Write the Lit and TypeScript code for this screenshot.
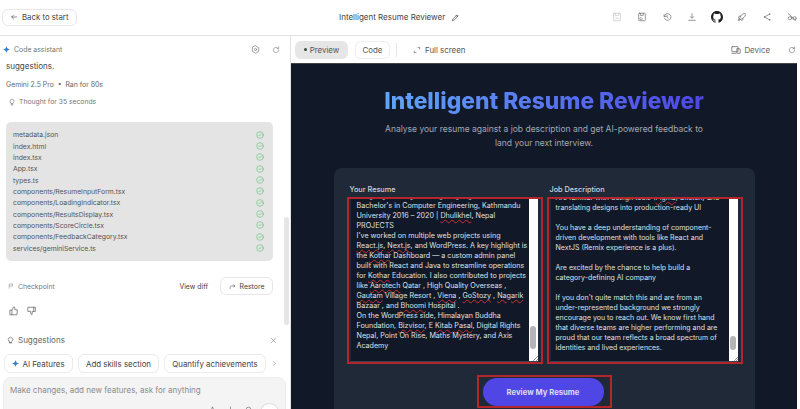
import { LitElement, html, css, svg } from "lit";
import { customElement } from "lit/decorators.js";

const ic = (body: unknown, size = 10, cls = "") => html`<svg class="ic ${cls}" width=${size} height=${size} viewBox="0 0 24 24" fill="none" stroke="currentColor" stroke-width="1.8" stroke-linecap="round" stroke-linejoin="round">${body}</svg>`;
const spark = (size = 8) => html`<svg width=${size} height=${size} viewBox="0 0 24 24"><path fill="#2f7fd8" d="M12 0C13 7 17 11 24 12 17 13 13 17 12 24 11 17 7 13 0 12 7 11 11 7 12 0Z"/></svg>`;
const refresh = svg`<path d="M20 12a8 8 0 1 1-2.6-5.900"/><path d="M20 3v5h-5"/>`;
const files = ["metadata.json","index.html","index.tsx","App.tsx","types.ts","components/ResumeInputForm.tsx","components/LoadingIndicator.tsx","components/ResultsDisplay.tsx","components/ScoreCircle.tsx","components/FeedbackCategory.tsx","services/geminiService.ts"];
const sp = (t: string) => html`<span class="sp">${t}</span>`;

@customElement("app-root")
export class AppRoot extends LitElement {
  static styles = css`
    :host { display: block; width: 800px; height: 409px; overflow: hidden; background: #fff; font-family: Inter, "Liberation Sans", sans-serif; color: #3c3c3c; }
    * { box-sizing: border-box; }
    svg { display: block; flex: none; }
    .header { height: 36px; border-bottom: 1px solid #e3e3e3; display: flex; align-items: center; padding: 0 3px 1px 2px; }
    .back { height: 17px; width: 75px; border: 1px solid #e8e8e8; border-radius: 6px; display: flex; align-items: center; gap: 4px; padding-left: 7px; font-size: 7.8px; color: #444; }
    .title { margin-left: 262px; display: flex; align-items: center; gap: 6px; font-size: 8px; color: #444; white-space: nowrap; }
    .actions { margin-left: auto; display: flex; align-items: center; gap: 15px; color: #777; }
    .dim { color: #c8c8c8; }
    .gh { margin: 0 -1px; }
    .main { display: flex; height: 373px; }
    .left { width: 291px; flex: none; border-right: 1px solid #e3e3e3; position: relative; overflow: hidden; }
    .thumbbar { position: absolute; left: 284px; top: 181px; width: 5px; height: 108px; background: #e6e6e6; border-radius: 3px; }
    .ca { display: flex; align-items: center; height: 27px; padding: 0 10px 0 3px; font-size: 6.9px; color: #777; gap: 4px; }
    .ca .sp1 { flex: 1; }
    .ca .g { margin-right: 8px; }
    .sugg { font-size: 8px; padding-left: 6px; color: #444; line-height: 10px; margin-top: -2px; }
    .meta { font-size: 6.9px; color: #666; padding-left: 6px; margin-top: 9px; line-height: 9px; white-space: nowrap; }
    .thought { display: flex; align-items: center; gap: 3px; font-size: 6.8px; color: #777; padding-left: 8px; margin-top: 8px; line-height: 10px; }
    .files { margin: 15px 0 0 6px; width: 267px; height: 139px; background: #e4e4e4; border-radius: 5px; padding: 7px 9px 0 7px; }
    .file { display: flex; justify-content: space-between; align-items: center; height: 11.35px; font-size: 6.8px; color: #555; }
    .check { color: #5fbf77; }
    .cp { display: flex; align-items: center; height: 20px; margin-top: 15px; padding: 0 17px 0 8px; font-size: 6.800px; color: #777; }
    .cp .cpt { display: flex; align-items: center; gap: 4px; flex: 1; }
    .diff { color: #444; font-size: 6.9px; margin-right: 12px; }
    .restore { width: 53px; height: 18px; border: 1px solid #e6e6e6; border-radius: 6px; display: flex; align-items: center; justify-content: center; gap: 4px; color: #444; font-size: 6.9px; }
    .thumbs { display: flex; gap: 8px; color: #666; padding-left: 9px; margin-top: 10px; }
    .sghead { display: flex; align-items: center; gap: 3px; padding: 0 13px 0 6px; margin-top: 18px; font-size: 8px; color: #666; height: 12px; }
    .sghead span { flex: 1; }
    .chips { display: flex; gap: 5px; padding-left: 4px; margin-top: 8px; font-size: 7.9px; color: #444; align-items: center; }
    .chip { height: 19px; border: 1px solid #ebebeb; border-radius: 6px; display: flex; align-items: center; justify-content: center; gap: 3px; white-space: nowrap; }
    .more { color: #777; }
    .input { margin: 4px 0 0 3px; width: 283px; height: 60px; background: #f4f4f4; border: 1px solid #ececec; border-radius: 8px; padding: 7px 6px; font-size: 8px; line-height: 10px; color: #8a8a8a; }
    .tools { display: flex; justify-content: flex-end; align-items: flex-start; margin-top: 8px; color: #444; gap: 11px; }
    .tools .ic { margin-top: 3px; }
    .circle { width: 19px; height: 19px; border-radius: 50%; background: #fff; border: 1px solid #ddd; margin-left: -3px; }
    .right { flex: 1; min-width: 0; display: flex; flex-direction: column; padding-right: 3px; }
    .toolbar { height: 27px; display: flex; align-items: center; font-size: 7.9px; color: #555; }
    .pill { height: 18px; border-radius: 6px; display: flex; align-items: center; justify-content: center; }
    .pv { width: 53px; margin-left: 4px; background: #e6e6e6; gap: 3px; }
    .dot { width: 3px; height: 3px; border-radius: 50%; background: #444; }
    .cd { width: 35px; margin-left: 7px; border: 1px solid #eeeeee; }
    .div { width: 1px; height: 14px; background: #e6e6e6; margin: 0 16px 0 6px; }
    .fs { display: flex; align-items: center; gap: 4px; }
    .dev { margin-left: auto; display: flex; align-items: center; gap: 3px; color: #666; }
    .rf { margin: 0 1px 0 18px; color: #666; }
    .preview { flex: 1; background: #111827; border-top: 1px solid #444; display: flex; flex-direction: column; align-items: center; overflow: hidden; }
    h1 { margin: 22px 0 0; font-size: 22.800px; line-height: 30px; font-weight: 800; background: linear-gradient(90deg, #60a5fa, #4f46e5); -webkit-background-clip: text; background-clip: text; color: transparent; white-space: nowrap; }
    .sub { margin-top: 6px; text-align: center; font-size: 8.5px; line-height: 14px; color: #a2a8b3; width: 328px; }
    .card { margin-top: 18px; width: 421px; flex: none; height: 260px; background: #1f2937; border-radius: 8px 8px 0 0; padding: 17px 12px 0 13px; }
    .cols { display: grid; grid-template-columns: 196px 196px; gap: 4px; }
    .lab { font-size: 7.3px; font-weight: 500; color: #d1d5db; padding-left: 3px; line-height: 9px; height: 12px; }
    .red { height: 167px; border: 2px solid #b3272c; padding: 0 3px 2px 2px; }
    .ta { height: 163px; background: #111827; display: flex; border-bottom: 1px solid #374151; overflow: hidden; }
    .txt { flex: 1; min-width: 0; padding: 0 0 0 6px; font-size: 7.150px; line-height: 10px; color: #dfe2e6; white-space: nowrap; overflow: hidden; }
    .txt.r { margin-top: -8px; height: 171px; }
    .txt.j { margin-top: -6px; height: 169px; padding-left: 5px; font-size: 7px; }
    .bar { width: 9px; background: #fff; flex: none; position: relative; }
    .bar i { position: absolute; left: 1px; width: 6px; height: 23px; background: #b4b4b4; border-radius: 3px; }
    .bar b { position: absolute; right: 0; bottom: 0; width: 5px; height: 5px; background: linear-gradient(135deg, transparent 50%, #999 50%, #999 60%, transparent 60%, transparent 75%, #999 75%, #999 85%, transparent 85%); }
    .sp { text-decoration: underline wavy #c33; text-decoration-thickness: 0.5px; text-underline-offset: 1px; }
    .redbtn { margin: 11px 0 0 130px; width: 135px; height: 33px; border: 2px solid #b3272c; padding: 1px 4px; }
    .btn { width: 121px; height: 28px; background: #4f46e5; border-radius: 14px; display: flex; align-items: center; justify-content: center; color: #dcdcf2; font-size: 7.700px; font-weight: 700; }
  `;

  render() {
    return html`
      <div class="header">
        <div class="back">${ic(svg`<path d="M20 12H5M11 6l-6 6 6 6"/>`, 8)}Back to start</div>
        <div class="title">Intelligent Resume Reviewer ${ic(svg`<path d="M4 20l1-4L16 5l3 3L8 19z"/><path d="M14 7l3 3"/>`, 9)}</div>
        <div class="actions">
          ${ic(svg`<rect x="4" y="3" width="16" height="18" rx="1"/><path d="M8 3v5h8V3M9 15h6"/>`, 10, "dim")}
          ${ic(svg`<rect x="4" y="3" width="16" height="18" rx="2"/><path d="M8 3v5h7V3M10 13a3 3 0 1 0 3 3"/>`, 10)}
          ${ic(svg`<path d="M5 6v5h5"/><path d="M5.500 11a8 8 0 1 1 .5 4"/><path d="M12 8v4l3 2"/>`, 10)}
          ${ic(svg`<path d="M12 4v10M8 11l4 4 4-4M4 20h16"/>`, 10)}
          <svg class="gh" width="12" height="12" viewBox="0 0 16 16" fill="#222"><path d="M8 0C3.580 0 0 3.580 0 8c0 3.540 2.290 6.530 5.470 7.590.4.07.55-.17.55-.38 0-.19-.01-.82-.01-1.490-2.010.37-2.530-.49-2.690-.94-.09-.23-.48-.94-.82-1.130-.28-.15-.68-.52-.01-.53.63-.01 1.080.58 1.230.82.72 1.210 1.870.87 2.330.66.07-.52.28-.87.51-1.070-1.780-.2-3.640-.89-3.640-3.950 0-.87.31-1.590.82-2.150-.08-.2-.36-1.020.08-2.120 0 0 .67-.21 2.200.82.64-.18 1.320-.27 2-.27s1.360.09 2 .27c1.530-1.040 2.200-.82 2.200-.82.44 1.100.16 1.920.08 2.120.51.56.82 1.270.82 2.150 0 3.070-1.870 3.750-3.650 3.950.29.25.54.73.54 1.480 0 1.070-.01 1.930-.01 2.200 0 .21.15.46.55.38A8.010 8.010 0 0 0 16 8c0-4.420-3.580-8-8-8z"/></svg>
          ${ic(svg`<path d="M5 19l4-9C12 5 16 3 20 4c1 4-1 8-6 11zM9 10H5l-1 3M14 15v4l-3 1M5 15l-2 5 5-2"/>`, 10)}
          ${ic(svg`<circle cx="18" cy="5" r="1"/><circle cx="6" cy="12" r="1"/><circle cx="18" cy="19" r="1"/><path d="M7 11l10-5M7 13l10 5"/>`, 10)}
          ${ic(svg`<circle cx="7" cy="15" r="4"/><circle cx="18" cy="15" r="4"/><path d="M3 4l18 16M11 14h3"/>`, 10)}
        </div>
      </div>
      <div class="main">
        <div class="left">
          <div class="ca">${spark(7)}<span class="sp1">Code assistant</span><span class="g">${ic(svg`<circle cx="12" cy="12" r="3"/><path d="M12 2l8.500 5v10L12 22l-8.500-5V7z"/>`, 9)}</span>${ic(refresh, 8)}</div>
          <div class="sugg">suggestions.</div>
          <div class="meta">Gemini 2.5 Pro &nbsp;•&nbsp; Ran for 80s</div>
          <div class="thought">${ic(svg`<path d="M9 18h6M10 21h4M8 14a6 6 0 1 1 8 0c-1 1-1.500 2-1.500 3h-5C9.500 16 9 15 8 14z"/>`, 8)}Thought for 35 seconds</div>
          <div class="files">
            ${files.map(f => html`<div class="file"><span>${f}</span><span class="check">${ic(svg`<circle cx="12" cy="12" r="10"/><path d="M8 12l3 3 5-6"/>`, 8)}</span></div>`)}
          </div>
          <div class="cp">
            <span class="cpt">${ic(svg`<path d="M5 21V4h14l-3 4 3 4H5"/>`, 6)}Checkpoint</span>
            <span class="diff">View diff</span>
            <span class="restore">${ic(svg`<path d="M4 19v-4a5 5 0 0 1 5-5h11M16 6l4 4-4 4"/>`, 7)}Restore</span>
          </div>
          <div class="thumbs">
            ${ic(svg`<path d="M3 10h4v11H3zM7 10l4-8c2 0 3 1 3 3v4h6l-1 12H7"/>`, 10)}
            ${ic(svg`<path d="M3 3h17v10h-7l-1 8c-2 0-3-2-3-4v-4H3z"/><path d="M16 3v10"/>`, 10)}
          </div>
          <div class="sghead">${ic(svg`<path d="M9 18h6M8 14a6 6 0 1 1 8 0c-1 1-1.500 2-1.500 4h-5c0-2-.5-3-1.500-4z"/>`, 9)}<span>Suggestions</span>${ic(svg`<path d="M5 5l14 14M19 5L5 19"/>`, 7)}</div>
          <div class="chips">
            <div class="chip" style="width:69px">${spark(7)}AI Features</div>
            <div class="chip" style="width:81px">Add skills section</div>
            <div class="chip" style="width:102px">Quantify achievements</div>
            <span class="more">${ic(svg`<path d="M9 6l6 6-6 6"/>`, 7)}</span>
          </div>
          <div class="input">Make changes, add new features, ask for anything
            <div class="tools">
              ${ic(svg`<path d="M4 22L12 3l8 19"/>`, 7)}
              ${ic(svg`<path d="M12 3v18"/>`, 7)}
              ${ic(svg`<circle cx="12" cy="12" r="8"/>`, 7)}
              <span class="circle"></span>
            </div>
          </div>
          <div class="thumbbar"></div>
        </div>
        <div class="right">
          <div class="toolbar">
            <div class="pill pv"><span class="dot"></span>Preview</div>
            <div class="pill cd">Code</div>
            <div class="div"></div>
            <div class="fs">${ic(svg`<path d="M4 15v5h5M20 9V4h-5"/>`, 8)}Full screen</div>
            <div class="dev">${ic(svg`<rect x="2" y="4" width="15" height="12" rx="1"/><rect x="14" y="9" width="8" height="11" rx="1"/><path d="M2 20h10"/>`, 10)}Device</div>
            <div class="rf">${ic(refresh, 8)}</div>
          </div>
          <div class="preview">
            <h1>Intelligent Resume Reviewer</h1>
            <div class="sub">Analyse your resume against a job description and get AI-powered feedback to land your next interview.</div>
            <div class="card">
              <div class="cols">
                <div>
                  <div class="lab">Your Resume</div>
                  <div class="red"><div class="ta">
                    <div class="txt r">
                      <div>Languages: Programming languages,</div>
                      <div>Bachelor's in Computer Engineering, Kathmandu</div>
                      <div>University 2016 – 2020 | ${sp("Dhulikhel")}, Nepal</div>
                      <div>PROJECTS</div>
                      <div>I've worked on multiple web projects using</div>
                      <div>${sp("React.js")}, ${sp("Next.js")}, and WordPress. A key highlight is</div>
                      <div>the ${sp("Kothar")} Dashboard — a custom admin panel</div>
                      <div>built with React and Java to streamline operations</div>
                      <div>for ${sp("Kothar")} Education. I also contributed to projects</div>
                      <div>like ${sp("Aarotech")} Qatar , High Quality Overseas ,</div>
                      <div>${sp("Gautam")} Village Resort , ${sp("Viena")} , ${sp("GoStozy")} , ${sp("Nagarik")}</div>
                      <div>Bazaar , and ${sp("Bhoomi")} Hospital .</div>
                      <div>On the WordPress side, Himalayan Buddha</div>
                      <div>Foundation, ${sp("Bizvisor")}, E ${sp("Kitab")} ${sp("Pasal")}, Digital Rights</div>
                      <div>Nepal, Point On Rise, Maths Mystery, and Axis</div>
                      <div>Academy</div>
                    </div>
                    <div class="bar"><i style="top:127px"></i><b></b></div>
                  </div></div>
                </div>
                <div>
                  <div class="lab">Job Description</div>
                  <div class="red"><div class="ta">
                    <div class="txt j">
                      <div>Are familiar with design tools (${sp("Figma")}, Sketch) and</div>
                      <div>translating designs into production-ready UI</div>
                      <div>&nbsp;</div>
                      <div>You have a deep understanding of component-</div>
                      <div>driven development with tools like React and</div>
                      <div>NextJS (Remix experience is a plus).</div>
                      <div>&nbsp;</div>
                      <div>Are excited by the chance to help build a</div>
                      <div>category-defining AI company</div>
                      <div>&nbsp;</div>
                      <div>If you don't quite match this and are from an</div>
                      <div>under-represented background we strongly</div>
                      <div>encourage you to reach out. We know first hand</div>
                      <div>that diverse teams are higher performing and are</div>
                      <div>proud that our team reflects a broad spectrum of</div>
                      <div>identities and lived experiences.</div>
                    </div>
                    <div class="bar"><i style="top:137px;height:14px"></i><b></b></div>
                  </div></div>
                </div>
              </div>
              <div class="redbtn"><div class="btn">Review My Resume</div></div>
            </div>
          </div>
        </div>
      </div>
    `;
  }
}
